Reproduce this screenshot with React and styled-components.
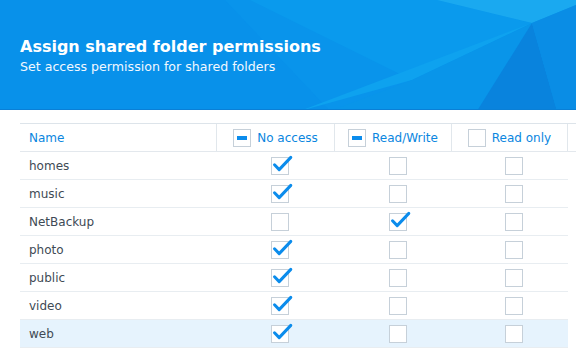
import React from "react";
import styled, { createGlobalStyle } from "styled-components";

const GlobalStyle = createGlobalStyle`
  html, body {
    margin: 0;
    padding: 0;
    background: #fff;
    font-family: "DejaVu Sans", Verdana, sans-serif;
  }
`;

const Page = styled.div`
  width: 576px;
  height: 351px;
  overflow: hidden;
  background: #fff;
`;

const Banner = styled.div`
  position: relative;
  height: 110px;
  padding: 37px 0 0 20px;
  box-sizing: border-box;
  background: #0891ea;
  border-bottom: 1px solid #0a7fd6;
  overflow: hidden;
`;

const BannerArt = styled.svg`
  position: absolute;
  left: 0;
  top: 0;
  width: 576px;
  height: 111px;
`;

const BannerText = styled.div`
  position: relative;
  color: #fff;
`;

const Title = styled.h1`
  margin: 0;
  font-size: 16px;
  line-height: 20px;
  font-weight: bold;
`;

const Subtitle = styled.p`
  margin: 2px 0 0;
  font-size: 12.6px;
  line-height: 16px;
  color: #f2f8ff;
`;

const Grid = styled.div`
  margin: 13px 0 0 20px;
  width: 556px;
`;

const HeaderRow = styled.div`
  display: grid;
  grid-template-columns: 197px 118px 117px 116px 8px;
  height: 27px;
  border-top: 1px solid #dde4ea;
  border-bottom: 1px solid #e3e8ed;
`;

const HeaderCell = styled.div`
  display: flex;
  align-items: center;
  justify-content: ${({ $left }) => ($left ? "flex-start" : "center")};
  padding-left: ${({ $left }) => ($left ? "9px" : "0")};
  gap: 6px;
  border-right: ${({ $last }) => ($last ? "none" : "1px solid #e1e7ec")};
  color: #0a86e0;
  font-size: 12px;
`;

const Row = styled.div`
  display: grid;
  grid-template-columns: 197px 118px 117px 116px;
  width: 548px;
  height: 27px;
  border-bottom: 1px solid #e8edf1;
  background: ${({ $selected }) => ($selected ? "#e6f3fd" : "transparent")};
`;

const NameCell = styled.div`
  display: flex;
  align-items: center;
  padding-left: 9px;
  color: #404a55;
  font-size: 12px;
`;

const BoxCell = styled.div`
  display: flex;
  align-items: center;
  justify-content: center;
  padding-left: 8px;
`;

const Box = styled.span`
  position: relative;
  display: inline-block;
  width: 16px;
  height: 16px;
  border: 1px solid #c6d0d9;
  background: #fff;
`;

const Minus = styled.span`
  position: absolute;
  left: 3px;
  top: 6px;
  width: 10px;
  height: 4px;
  background: #0b8cec;
`;

const Tick = styled.svg`
  position: absolute;
  left: 1px;
  top: -3px;
  width: 19px;
  height: 19px;
  overflow: visible;
`;

function Check({ checked, partial }) {
  return (
    <Box>
      {partial && <Minus />}
      {checked && (
        <Tick viewBox="0 0 19 19">
          <path
            d="M1.5 9.8 L6.2 14.6 L17.8 2.4"
            fill="none"
            stroke="#0b8cec"
            strokeWidth="3"
            strokeLinecap="round"
            strokeLinejoin="round"
          />
        </Tick>
      )}
    </Box>
  );
}

const folders = [
  { name: "homes", perm: 0 },
  { name: "music", perm: 0 },
  { name: "NetBackup", perm: 1 },
  { name: "photo", perm: 0 },
  { name: "public", perm: 0 },
  { name: "video", perm: 0 },
  { name: "web", perm: 0, selected: true },
];

export default function App() {
  return (
    <Page>
      <GlobalStyle />
      <Banner>
        <BannerArt viewBox="0 0 576 111" preserveAspectRatio="none">
          <polygon points="225,0 576,0 576,111 330,111" fill="#0994eb" />
          <polygon points="250,0 437,0 532,23 412,80" fill="#0a9aed" />
          <polygon points="437,0 576,0 576,5 532,23" fill="#1aa9f0" />
          <polygon points="300,111 532,23 412,80" fill="#0ea2ef" />
          <polygon points="412,80 532,23 477,111 330,111" fill="#0995e9" />
          <polygon points="477,111 532,23 557,111" fill="#0983dd" />
          <polygon points="532,23 576,5 576,111 557,111" fill="#0a8de5" />
        </BannerArt>
        <BannerText>
          <Title>Assign shared folder permissions</Title>
          <Subtitle>Set access permission for shared folders</Subtitle>
        </BannerText>
      </Banner>
      <Grid>
        <HeaderRow>
          <HeaderCell $left>Name</HeaderCell>
          <HeaderCell>
            <Check partial />
            No access
          </HeaderCell>
          <HeaderCell>
            <Check partial />
            Read/Write
          </HeaderCell>
          <HeaderCell>
            <Check />
            Read only
          </HeaderCell>
          <HeaderCell $last />
        </HeaderRow>
        {folders.map((f) => (
          <Row key={f.name} $selected={f.selected}>
            <NameCell>{f.name}</NameCell>
            <BoxCell>
              <Check checked={f.perm === 0} />
            </BoxCell>
            <BoxCell>
              <Check checked={f.perm === 1} />
            </BoxCell>
            <BoxCell>
              <Check checked={f.perm === 2} />
            </BoxCell>
          </Row>
        ))}
      </Grid>
    </Page>
  );
}
